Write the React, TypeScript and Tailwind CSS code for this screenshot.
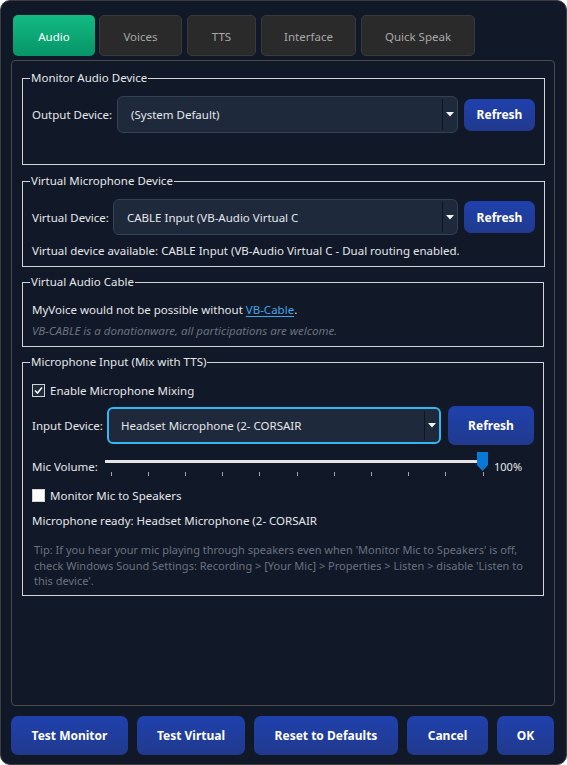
import React from 'react';

const tabs = [
  { label: 'Audio', w: 'w-[82px]', active: true },
  { label: 'Voices', w: 'w-[83px]' },
  { label: 'TTS', w: 'w-[69px]' },
  { label: 'Interface', w: 'w-[95px]' },
  { label: 'Quick Speak', w: 'w-[114px]' },
];

function Combo({ value, focused = false, className = '' }: { value: string; focused?: boolean; className?: string }) {
  return (
    <div
      className={`flex items-stretch rounded-[6px] bg-[#1e293b] ${
        focused ? 'border-2 border-[#38b6f2]' : 'border border-[#334155]'
      } ${className}`}
    >
      <div className={`flex-1 flex items-center pt-[1px] text-[11.5px] text-[#e5e7eb] ${focused ? 'pl-[12px]' : 'pl-[13px]'}`}>{value}</div>
      <div className="w-[15px] my-[2px] border-l border-[#0f1522] flex items-center justify-center">
        <svg width="8" height="5" viewBox="0 0 8 5">
          <path d="M0 0 H8 L4 4.5 Z" fill="#f1f5f9" />
        </svg>
      </div>
    </div>
  );
}

function BlueButton({ children, className = '' }: { children: React.ReactNode; className?: string }) {
  return (
    <button className={`rounded-[7px] bg-gradient-to-b from-[#1f41ad] to-[#213a8e] text-white font-bold text-[12px] pt-[1px] ${className}`}>
      {children}
    </button>
  );
}

function Group({ title, children, className = '' }: { title: string; children: React.ReactNode; className?: string }) {
  return (
    <fieldset className={`border border-[#d4d4d8] ${className}`}>
      <legend className="ml-[7px] px-[1px] text-[11.5px] leading-[16px] text-[#e5e7eb]">{title}</legend>
      {children}
    </fieldset>
  );
}

function VolumeSlider() {
  const ticks = Array.from({ length: 11 }, (_, i) => 5.5 + i * 37.2);
  return (
    <svg width="384" height="25" viewBox="0 0 384 25">
      <rect x="0" y="8" width="380" height="3" fill="#e5e5e5" />
      {ticks.map((x) => (
        <rect key={x} x={Math.round(x)} y="20" width="1" height="4" fill="#a3a3a3" />
      ))}
      <path d="M372 0 H383 V13 L377.5 19 L372 13 Z" fill="#0a78d6" />
    </svg>
  );
}

export default function App() {
  return (
    <div className="w-[567px] h-[765px] bg-[#111827] border border-[#3d3d40] rounded-[10px] flex flex-col pl-[10px] pr-[11px] pt-[14px] font-['Noto_Sans',sans-serif] text-[#e5e7eb]">
      {/* Tabs */}
      <div className="flex h-[41px] ml-[2px]">
        {tabs.map((t, i) => (
          <div
            key={t.label}
            className={`${t.w} ${i === 0 ? '' : i === 1 ? 'ml-[4px]' : 'ml-[5px]'} rounded-[5px] flex items-center justify-center pt-[2px] text-[11.5px] ${
              t.active
                ? 'bg-gradient-to-b from-[#13ba83] to-[#069567] text-white'
                : 'bg-[#2a2a2a] border border-[#3a3a3a] text-[#a8a8a8]'
            }`}
          >
            {t.label}
          </div>
        ))}
      </div>

      {/* Pane */}
      <div className="mt-[4px] h-[646px] border border-[#4a4a4a] rounded-[4px] px-[10px] pt-[9px] flex flex-col">
        <Group title="Monitor Audio Device">
          <div className="px-[9px] mt-[10px] pb-[31px] flex items-center">
            <span className="text-[11.5px] w-[85px] pt-[1px]">Output Device:</span>
            <Combo value="(System Default)" className="h-[37px] w-[341px]" />
            <BlueButton className="ml-[6px] w-[71px] h-[32px]">Refresh</BlueButton>
          </div>
        </Group>

        <Group title="Virtual Microphone Device" className="mt-[8px]">
          <div className="px-[9px] mt-[10px] flex items-center">
            <span className="text-[11.5px] w-[81px] pt-[1px]">Virtual Device:</span>
            <Combo value="CABLE Input (VB-Audio Virtual C" className="h-[36px] w-[345px]" />
            <BlueButton className="ml-[6px] w-[71px] h-[32px]">Refresh</BlueButton>
          </div>
          <div className="px-[9px] mt-[8px] pb-[7px] text-[11.5px] leading-[16px]">
            Virtual device available: CABLE Input (VB-Audio Virtual C - Dual routing enabled.
          </div>
        </Group>

        <Group title="Virtual Audio Cable" className="mt-[7px]">
          <div className="px-[9px] mt-[12px] text-[11.5px] leading-[16px]">
            MyVoice would not be possible without{' '}
            <span className="text-[#3fa4e6] underline underline-offset-2">VB-Cable</span>.
          </div>
          <div className="px-[9px] mt-[5px] pb-[7px] text-[11.5px] leading-[16px] italic text-[#6b7280]">
            VB-CABLE is a donationware, all participations are welcome.
          </div>
        </Group>

        <Group title="Microphone Input (Mix with TTS)" className="mt-[7px]">
          <div className="px-[9px] mt-[12px] h-[16px] flex items-center">
            <span className="w-[13px] h-[13px] border border-[#cfd4da] bg-[#1f2937] flex items-center justify-center">
              <svg width="11" height="11" viewBox="0 0 11 11">
                <path d="M2 5.5 L4.5 8 L9 2.5" stroke="#f3f4f6" strokeWidth="1.6" fill="none" />
              </svg>
            </span>
            <span className="ml-[5px] text-[11.5px] pt-[1px]">Enable Microphone Mixing</span>
          </div>
          <div className="px-[9px] mt-[8px] flex items-center h-[39px]">
            <span className="text-[11.5px] w-[75px] pt-[1px]">Input Device:</span>
            <Combo value="Headset Microphone (2- CORSAIR" focused className="h-[37px] w-[334px]" />
            <BlueButton className="ml-[7px] w-[86px] h-[39px]">Refresh</BlueButton>
          </div>
          <div className="px-[9px] mt-[7px] flex items-start h-[25px]">
            <span className="text-[11.5px] leading-[16px] mt-[7px] w-[73px]">Mic Volume:</span>
            <VolumeSlider />
            <span className="text-[11px] leading-[16px] mt-[7px] ml-[5px]">100%</span>
          </div>
          <div className="px-[9px] mt-[10px] h-[16px] flex items-center">
            <span className="w-[13px] h-[13px] bg-white border border-[#d4d4d4]" />
            <span className="ml-[5px] text-[11.5px] pt-[1px]">Monitor Mic to Speakers</span>
          </div>
          <div className="px-[9px] mt-[10px] text-[11.5px] leading-[16px]">
            Microphone ready: Headset Microphone (2- CORSAIR
          </div>
          <div className="pl-[11px] pr-[9px] mt-[13px] pb-[6px] text-[11px] leading-[15.5px] text-[#6b7280] whitespace-nowrap">
            Tip: If you hear your mic playing through speakers even when 'Monitor Mic to Speakers' is off,
            <br />
            check Windows Sound Settings: Recording &gt; [Your Mic] &gt; Properties &gt; Listen &gt; disable 'Listen to
            <br />
            this device'.
          </div>
        </Group>
      </div>

      {/* Bottom buttons */}
      <div className="mt-[10px] flex gap-[9px] h-[39px]">
        <BlueButton className="w-[117px]">Test Monitor</BlueButton>
        <BlueButton className="w-[108px]">Test Virtual</BlueButton>
        <BlueButton className="w-[144px]">Reset to Defaults</BlueButton>
        <BlueButton className="w-[81px]">Cancel</BlueButton>
        <BlueButton className="w-[57px]">OK</BlueButton>
      </div>
    </div>
  );
}
